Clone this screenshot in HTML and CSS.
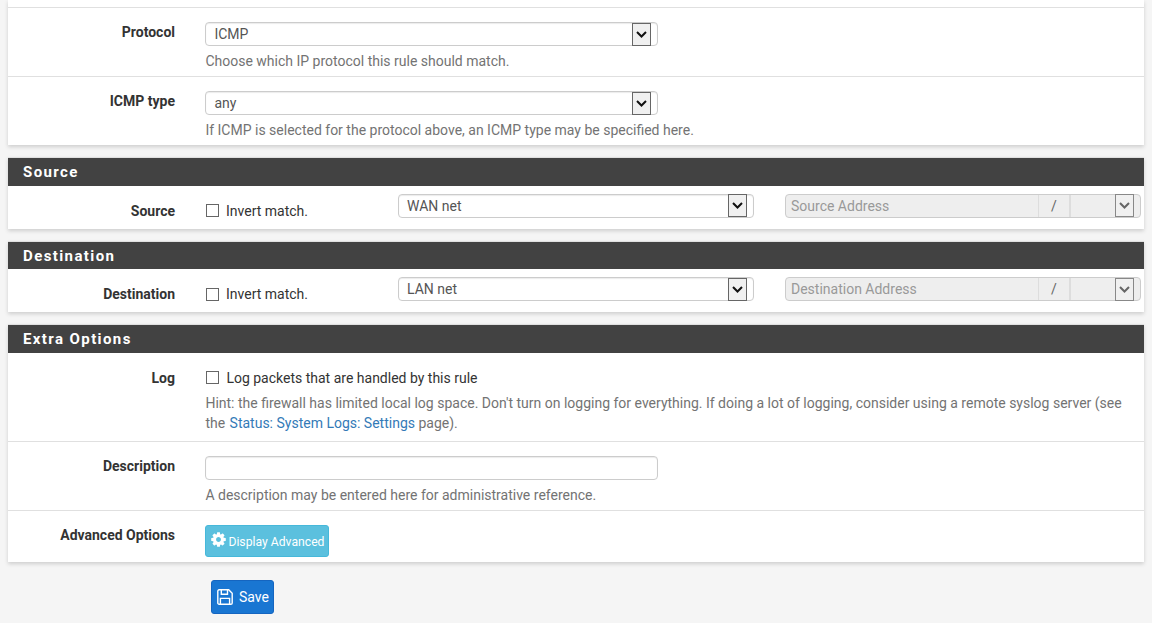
FILE: index.html
```html
<!DOCTYPE html>
<html lang="en">
<head>
<meta charset="utf-8">
<title>Firewall Rule</title>
<link rel="stylesheet" href="styles.css">
</head>
<body>
<form class="page">
  <section class="panel">
    <div class="row row-stub"></div>
    <div class="row">
      <div class="label">Protocol</div>
      <div class="control">
        <div class="select wide"><span class="select-text">ICMP</span><span class="arrow"><svg viewBox="0 0 11 7" class="chev"><path d="M1 1l4.5 4.5L10 1"/></svg></span></div>
        <p class="help">Choose which IP protocol this rule should match.</p>
      </div>
    </div>
    <div class="row">
      <div class="label">ICMP type</div>
      <div class="control">
        <div class="select wide"><span class="select-text">any</span><span class="arrow"><svg viewBox="0 0 11 7" class="chev"><path d="M1 1l4.5 4.5L10 1"/></svg></span></div>
        <p class="help">If ICMP is selected for the protocol above, an ICMP type may be specified here.</p>
      </div>
    </div>
  </section>

  <section class="panel">
    <h2 class="heading">Source</h2>
    <div class="row row-inline">
      <div class="label">Source</div>
      <label class="check check-col"><span class="box"></span>Invert match.</label>
      <div class="select addr-select"><span class="select-text">WAN net</span><span class="arrow"><svg viewBox="0 0 11 7" class="chev"><path d="M1 1l4.5 4.5L10 1"/></svg></span></div>
      <div class="addr">
        <span class="addr-input">Source Address</span>
        <span class="addr-slash">/</span>
        <span class="addr-mask"><span class="arrow arrow-off"><svg viewBox="0 0 11 7" class="chev"><path d="M1 1l4.5 4.5L10 1"/></svg></span></span>
      </div>
    </div>
  </section>

  <section class="panel">
    <h2 class="heading">Destination</h2>
    <div class="row row-inline">
      <div class="label">Destination</div>
      <label class="check check-col"><span class="box"></span>Invert match.</label>
      <div class="select addr-select"><span class="select-text">LAN net</span><span class="arrow"><svg viewBox="0 0 11 7" class="chev"><path d="M1 1l4.5 4.5L10 1"/></svg></span></div>
      <div class="addr">
        <span class="addr-input">Destination Address</span>
        <span class="addr-slash">/</span>
        <span class="addr-mask"><span class="arrow arrow-off"><svg viewBox="0 0 11 7" class="chev"><path d="M1 1l4.5 4.5L10 1"/></svg></span></span>
      </div>
    </div>
  </section>

  <section class="panel panel-last">
    <h2 class="heading heading-extra">Extra Options</h2>
    <div class="row row-log">
      <div class="label label-log">Log</div>
      <div class="control">
        <label class="check check-log"><span class="box"></span>Log packets that are handled by this rule</label>
        <p class="help">Hint: the firewall has limited local log space. Don't turn on logging for everything. If doing a lot of logging, consider using a remote syslog server (see the <a href="#" class="link">Status: System Logs: Settings</a> page).</p>
      </div>
    </div>
    <div class="row">
      <div class="label">Description</div>
      <div class="control">
        <div class="select wide"></div>
        <p class="help">A description may be entered here for administrative reference.</p>
      </div>
    </div>
    <div class="row row-adv">
      <div class="label">Advanced Options</div>
      <div class="control">
        <button type="button" class="btn btn-info"><svg viewBox="0 0 1792 1792" class="gear"><path d="M1152 896q0-106-75-181t-181-75-181 75-75 181 75 181 181 75 181-75 75-181zm512-109v222q0 12-8 23t-20 13l-185 28q-19 54-39 91 35 50 107 138 10 12 10 25t-9 23q-27 37-99 108t-94 71q-12 0-26-9l-138-108q-44 23-91 38-16 136-29 186-7 28-36 28h-222q-14 0-24.5-8.5t-11.5-21.5l-28-184q-49-16-90-37l-141 107q-10 9-25 9-14 0-25-11-126-114-165-168-7-10-7-23 0-12 8-23 15-21 51-66.5t54-70.5q-27-50-41-99l-183-27q-13-2-21-12.5t-8-23.5v-222q0-12 8-23t19-13l186-28q14-46 39-92-40-57-107-138-10-12-10-24 0-10 9-23 26-36 98.5-107.5t94.5-71.5q13 0 26 10l138 107q44-23 91-38 16-136 29-186 7-28 36-28h222q14 0 24.5 8.5t11.5 21.5l28 184q49 16 90 37l142-107q9-9 24-9 13 0 25 10 129 119 165 170 7 8 7 22 0 12-8 23-15 21-51 66.5t-54 70.5q26 50 41 98l183 28q13 2 21 12.5t8 23.5z"/></svg>Display Advanced</button>
      </div>
    </div>
  </section>

  <button type="button" class="btn btn-save"><svg viewBox="0 0 16 16" class="floppy"><path d="M1.7.8h10l3.5 3.5v9.6a1.3 1.3 0 0 1-1.3 1.3H2.1a1.3 1.3 0 0 1-1.3-1.3V2.1A1.3 1.3 0 0 1 2.1.8z"/><path d="M4.3 1v4.2h6.2V1"/><path d="M3.4 15v-5.6h9.2V15"/></svg>Save</button>
</form>
</body>
</html>
```
FILE: styles.css
```css
* { box-sizing: border-box; }
html, body { margin: 0; height: 623px; overflow: hidden; }
body {
  background: #f5f5f5;
  color: #333;
  font-family: Roboto, "Liberation Sans", sans-serif;
  font-size: 14px;
  line-height: 20px;
}
.page { padding: 0 8px; }
.panel {
  background: #fff;
  margin-bottom: 12px;
  box-shadow: 0 2px 4px rgba(0, 0, 0, .16);
}
.panel.panel-last { margin-bottom: 18px; }
.heading {
  margin: 0;
  height: 28.6px;
  padding: 0 15px;
  background: #424242;
  border-top: 1px solid #e0e0e0;
  color: #fff;
  font-size: 15px;
  font-weight: 700;
  line-height: 28px;
  letter-spacing: 1.4px;
}
.heading-extra { line-height: 29px; }
.row {
  display: grid;
  grid-template-columns: 167px 1fr;
  column-gap: 30.4px;
  height: 69px;
  padding-top: 14px;
  border-bottom: 1px solid #e0e0e0;
}
.row:last-child { border-bottom: 0; height: 68px; }
.row-stub { height: 8px; padding: 0; display: block; }
.row-inline {
  grid-template-columns: 167px 223px 356px 356px;
  column-gap: 0;
  padding-top: 8px;
}
.row-inline:last-child { height: 43px; }
.row-inline .label { padding-top: 8px; margin-top: -1px; }
.row-inline .check-col { margin-left: 30px; padding-top: 7px; height: 27px; }
.row-log { height: 89px; }
.row-adv:last-child { height: 51px; }
.label {
  text-align: right;
  font-weight: 700;
  line-height: 20px;
}
.label-log { margin-top: 1px; }
.control { min-width: 0; }
.select {
  display: flex;
  align-items: center;
  justify-content: space-between;
  height: 24px;
  background: #fff;
  border: 1px solid #ccc;
  border-radius: 4px;
  box-shadow: inset 0 1px 1px rgba(0, 0, 0, .08);
}
.wide { width: 453px; }
.select-text { padding-left: 8px; color: #555; }
.arrow {
  display: flex;
  align-items: center;
  justify-content: center;
  width: 19px;
  height: 23px;
  margin-right: 6px;
  background: #f0f0f0;
  border: 1px solid #666;
}
.arrow-off { border-color: #888; }
.chev {
  width: 11px;
  height: 7px;
  fill: none;
  stroke: #111;
  stroke-width: 2;
}
.arrow-off .chev { stroke: #666; }
.addr-select { width: 356px; }
.addr {
  display: flex;
  width: 356px;
  height: 24px;
  margin-left: 31px;
  background: #eee;
  border: 1px solid #ccc;
  border-radius: 4px;
  color: #999;
}
.addr-input { width: 252px; padding: 1px 0 0 5px; line-height: 21px; }
.addr-slash {
  width: 33px;
  border-left: 1px solid #ddd;
  border-right: 2px solid #ddd;
  text-align: center;
  color: #666;
  line-height: 23px;
}
.addr-mask {
  flex: 1;
  display: flex;
  justify-content: flex-end;
  align-items: center;
}
.help {
  margin: 5px 0 0;
  color: #737373;
  line-height: 20px;
}
.link { color: #337ab7; text-decoration: none; margin-left: 1px; }
.check {
  display: flex;
  align-items: center;
  color: #333;
  height: 20px;
}
.check-log { margin-top: 1px; }
.box {
  width: 13px;
  height: 13px;
  margin: 0 7px 0 1px;
  background: #fff;
  border: 1px solid #666;
  flex: none;
}
.btn {
  display: flex;
  align-items: center;
  border-radius: 3px;
  color: #fff;
  font-family: inherit;
  padding: 0;
  white-space: nowrap;
}
.btn-info {
  width: 124px;
  height: 32px;
  padding: 2px 0 0 4px;
  background: #5bc0de;
  border: 1px solid #46b8da;
  font-size: 12.2px;
}
.gear { width: 17px; height: 17px; fill: #fff; margin: -5px 1px 0 0; flex: none; }
.btn-save {
  width: 63px;
  height: 34px;
  margin-left: 203px;
  padding-left: 5px;
  background: #1976d2;
  border: 1px solid #1565c0;
  font-size: 14px;
}
.floppy {
  width: 16px;
  height: 16px;
  margin-right: 6px;
  fill: none;
  stroke: #fff;
  stroke-width: 1.4;
  flex: none;
}
```
